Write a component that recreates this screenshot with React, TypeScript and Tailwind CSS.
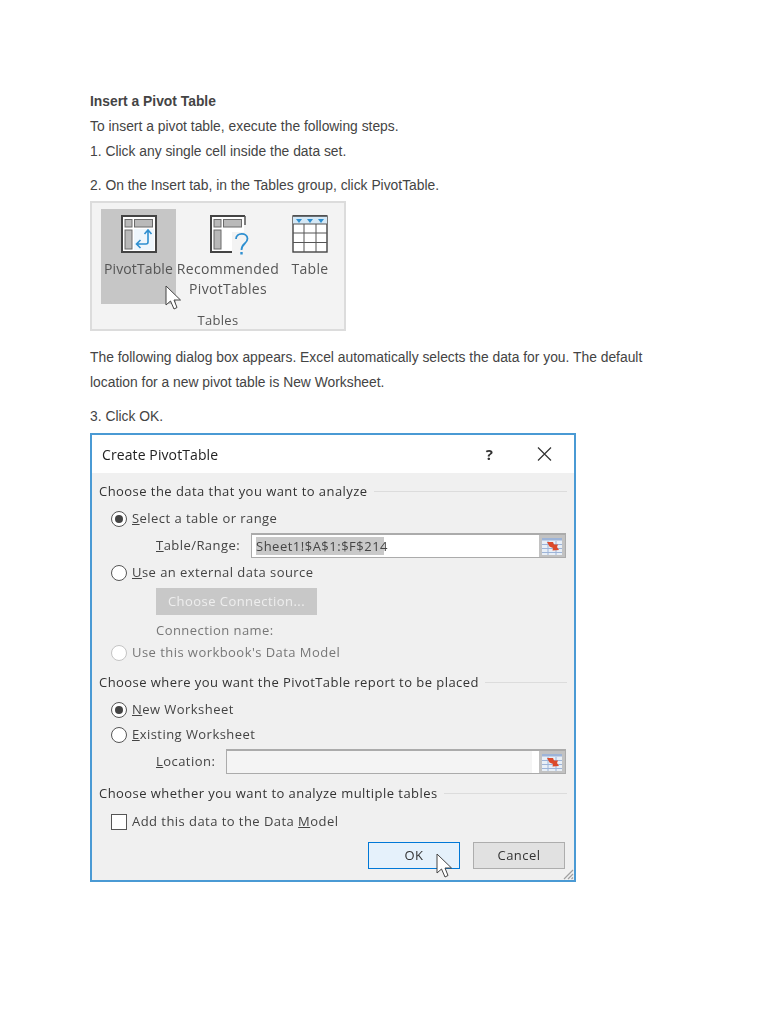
const ui = { fontFamily: '"Open Sans", "Noto Sans", sans-serif' };

function Cursor({ className }: { className: string }) {
  return (
    <svg className={className} viewBox="0 0 17 25" width="17" height="25">
      <path d="M1 1 L1 20 L5.500 16 L9 24 L12 22.500 L9 15 L15.500 15 Z" fill="#fff" stroke="#444" strokeWidth="1" strokeLinejoin="round" />
    </svg>
  );
}

function PivotIcon() {
  return (
    <svg width="36" height="38" viewBox="0 0 36 38">
      <rect x="1" y="1" width="34" height="36" fill="#fff" stroke="#444" strokeWidth="2" />
      <rect x="4" y="4.500" width="7" height="7.500" fill="#b9b9b9" stroke="#6a6a6a" />
      <rect x="13.500" y="4.500" width="18" height="7.500" fill="#b9b9b9" stroke="#6a6a6a" />
      <rect x="4" y="15" width="7" height="19" fill="#b9b9b9" stroke="#6a6a6a" />
      <rect x="13" y="14" width="20" height="21" fill="#eef6fc" />
      <path d="M27 15.500 V27 Q27 29 25 29 H16 M23.500 19 L27 15 L30.500 19 M19.500 25 L15.500 29 L19.500 33" fill="none" stroke="#2e8fd0" strokeWidth="1.600" />
    </svg>
  );
}

function RecommendedIcon() {
  return (
    <svg width="36" height="38" viewBox="0 0 36 38" className="overflow-visible">
      <path d="M35 1 H1 V37 H30" fill="#fff" stroke="#444" strokeWidth="2" />
      <path d="M2 2 H34 V36 H2 Z" fill="#fff" />
      <path d="M35 1 V10" stroke="#555" strokeWidth="1.500" />
      <rect x="4" y="4.500" width="7" height="7.500" fill="#b9b9b9" stroke="#6a6a6a" />
      <rect x="13.500" y="4.500" width="18" height="7.500" fill="#b9b9b9" stroke="#6a6a6a" />
      <rect x="4" y="15" width="7" height="19" fill="#b9b9b9" stroke="#6a6a6a" />
      <path d="M22 17 H38 V40 H22 Z" fill="#f3f3f3" />
      <path d="M26 24 C26 17.500 37 17 37.500 23.500 C37.500 29 31.500 28 31.500 35" fill="none" stroke="#2e8fd0" strokeWidth="1.800" />
      <rect x="30.300" y="37" width="2.400" height="2.500" fill="#2e8fd0" />
    </svg>
  );
}

function TableIcon() {
  return (
    <svg width="36" height="38" viewBox="0 0 36 38">
      <rect x="1" y="1" width="34" height="36" fill="#fff" stroke="#444" strokeWidth="1.400" />
      <rect x="1" y="1" width="34" height="8" fill="#d4e8f6" />
      <path d="M1 1 H35" stroke="#444" strokeWidth="1.600" />
      <path d="M4 4 H10 L7 8 Z M15 4 H21 L18 8 Z M26 4 H32 L29 8 Z" fill="#2e8fd0" />
      <path d="M1 9 H35 M1 18 H35 M1 27.500 H35 M12 9 V37 M24 9 V37" stroke="#555" strokeWidth="1" fill="none" />
    </svg>
  );
}

function RefIcon() {
  return (
    <svg width="20" height="17" viewBox="0 0 20 17">
      <rect x="0" y="0" width="20" height="17" fill="#e8eff7" />
      <rect x="0" y="0" width="20" height="2.500" fill="#9db4d8" />
      <path d="M0 6.500 H20 M0 10.500 H20 M0 14.500 H20 M6 3 V17 M14 3 V17" stroke="#9db4d8" strokeWidth="1" fill="none" />
      <path d="M5 4 H11 L12 6.500 L16 6.500 L15 9 L17 12 L10.500 12.500 L11 10 L7.500 8.500 Z" fill="#dc4a2b" />
    </svg>
  );
}

function Radio({ on, dim }: { on?: boolean; dim?: boolean }) {
  return (
    <span className={`flex h-4 w-4 shrink-0 items-center justify-center rounded-full border-[1.5px] bg-white ${dim ? "border-[#c4c4c4]" : "border-[#555]"}`}>
      {on && <span className="h-2 w-2 rounded-full bg-[#444]" />}
    </span>
  );
}

function Heading({ children }: { children: string }) {
  return (
    <div className="flex items-center gap-[6px] pl-[7px] pr-[7px]">
      <span className="whitespace-nowrap text-[13px] tracking-[0.45px] text-[#333]">{children}</span>
      <span className="h-px flex-1 bg-[#dcdcdc]" />
    </div>
  );
}

function Ribbon() {
  return (
    <div className="relative flex h-[130px] w-[256px] flex-col border-2 border-[#dcdcdc] bg-[#f3f3f3] blur-[0.35px]" style={ui}>
      <div className="flex h-[101px] items-stretch pl-[9px] pt-[5px] text-[14px] leading-[20px] text-[#555]">
        <div className="mt-[1px] flex w-[75px] shrink-0 flex-col items-center bg-[#c6c6c6] pt-[6px] tracking-[0.1px]">
          <PivotIcon />
          <span className="mt-[6px] whitespace-nowrap">PivotTable</span>
        </div>
        <div className="mt-[1px] flex w-[104px] shrink-0 flex-col items-center pt-[6px] tracking-[0.3px]">
          <RecommendedIcon />
          <span className="mt-[6px] whitespace-nowrap">Recommended</span>
          <span className="whitespace-nowrap">PivotTables</span>
        </div>
        <div className="ml-[12px] mt-[1px] flex w-[36px] shrink-0 flex-col items-center pt-[6px] tracking-[0.3px]">
          <TableIcon />
          <span className="mt-[6px] whitespace-nowrap">Table</span>
        </div>
      </div>
      <div className="mt-[7px] text-center text-[13px] leading-[18px] tracking-[0.3px] text-[#555]">Tables</div>
      <Cursor className="absolute left-[73px] top-[82px]" />
    </div>
  );
}

function Dialog() {
  return (
    <div className="relative flex h-[449px] w-[486px] flex-col border-2 border-[#4a9ad4] bg-[#f0f0f0] text-[13px] text-[#444] blur-[0.35px]" style={ui}>
      <div className="flex h-[38px] shrink-0 items-center bg-white pl-[10px]">
        <span className="flex-1 text-[14px] tracking-[0.1px] text-[#222]">Create PivotTable</span>
        <span className="mr-[44px] text-[15px] font-bold text-[#333]">?</span>
        <svg className="mr-[22px]" width="15" height="14" viewBox="0 0 15 14">
          <path d="M1 0.500 L14 13.500 M14 0.500 L1 13.500" stroke="#333" strokeWidth="1.200" />
        </svg>
      </div>

      <div className="mt-[9px] h-[18px] leading-[18px]"><Heading>Choose the data that you want to analyze</Heading></div>

      <div className="ml-[19px] mt-[10px] flex h-[18px] items-center gap-[5px] tracking-[0.45px]">
        <Radio on /><span><u>S</u>elect a table or range</span>
      </div>

      <div className="ml-[64px] mt-[5px] flex h-[25px] items-center tracking-[0.45px]">
        <span className="w-[95px]"><u>T</u>able/Range:</span>
        <div className="flex h-[25px] w-[315px] items-stretch border border-t-2 border-[#ababab] bg-white">
          <span className="my-auto ml-[4px] h-[18px] w-[128px] bg-[#c9c9c9] text-center leading-[18px] tracking-[0.5px]">Sheet1!$A$1:$F$214</span>
          <span className="ml-auto flex w-[26px] items-center justify-center bg-[#c2c2c2]"><RefIcon /></span>
        </div>
      </div>

      <div className="ml-[19px] mt-[3px] flex h-[24px] items-center gap-[5px] tracking-[0.45px]">
        <Radio /><span><u>U</u>se an external data source</span>
      </div>

      <div className="ml-[64px] mt-[3px] flex h-[27px] w-[161px] items-center justify-center bg-[#c8c8c8] tracking-[0.45px] text-[#eeeeee]">Choose Connection...</div>

      <div className="ml-[64px] mt-[6px] h-[18px] leading-[18px] tracking-[0.45px] text-[#777]">Connection name:</div>

      <div className="ml-[19px] mt-[5px] flex h-[18px] items-center gap-[5px] tracking-[0.45px] text-[#777]">
        <Radio dim /><span>Use this workbook's Data Model</span>
      </div>

      <div className="mt-[11px] h-[18px] leading-[18px]"><Heading>Choose where you want the PivotTable report to be placed</Heading></div>

      <div className="ml-[19px] mt-[10px] flex h-[18px] items-center gap-[5px] tracking-[0.45px]">
        <Radio on /><span><u>N</u>ew Worksheet</span>
      </div>

      <div className="ml-[19px] mt-[7px] flex h-[18px] items-center gap-[5px] tracking-[0.45px]">
        <Radio /><span><u>E</u>xisting Worksheet</span>
      </div>

      <div className="ml-[64px] mt-[5px] flex h-[25px] items-center tracking-[0.45px]">
        <span className="w-[70px]"><u>L</u>ocation:</span>
        <div className="flex h-[25px] w-[340px] items-stretch border border-t-2 border-[#ababab] bg-white">
          <span className="flex-1 bg-[#f4f4f4]" />
          <span className="w-[7px] bg-white" />
          <span className="flex w-[26px] items-center justify-center bg-[#c2c2c2]"><RefIcon /></span>
        </div>
      </div>

      <div className="mt-[10px] h-[18px] leading-[18px]"><Heading>Choose whether you want to analyze multiple tables</Heading></div>

      <div className="ml-[19px] mt-[11px] flex h-[18px] items-center gap-[5px] tracking-[0.45px]">
        <span className="h-4 w-4 shrink-0 border-[1.5px] border-[#555] bg-white" />
        <span>Add this data to the Data <u>M</u>odel</span>
      </div>

      <div className="mt-[11px] flex justify-end gap-[13px] pr-[9px] tracking-[0.45px]">
        <div className="flex h-[27px] w-[92px] items-center justify-center border border-[#0078d7] bg-[#e5f1fb] text-[#333]">OK</div>
        <div className="flex h-[27px] w-[92px] items-center justify-center border border-[#adadad] bg-[#e1e1e1] text-[#333]">Cancel</div>
      </div>

      <Cursor className="absolute left-[344px] top-[418px]" />
      <svg className="absolute bottom-0 right-0" width="12" height="12" viewBox="0 0 12 12">
        <path d="M11 2 L2 11 M11 6 L6 11 M11 9.500 L9.500 11" stroke="#a0a0a0" strokeWidth="1.200" />
      </svg>
    </div>
  );
}

export default function App() {
  return (
    <div className="h-[1024px] w-[768px] overflow-hidden bg-white pl-[90px] pt-[89px]">
      <div className="text-[13.85px] leading-[25px] text-[#444]" style={{ fontFamily: '"Liberation Sans", Arial, sans-serif' }}>
        <p className="font-bold">Insert a Pivot Table</p>
        <p>To insert a pivot table, execute the following steps.</p>
        <p>1. Click any single cell inside the data set.</p>
        <p className="mt-[9px]">2. On the Insert tab, in the Tables group, click PivotTable.</p>
        <div className="mb-[14px] mt-[3px]"><Ribbon /></div>
        <p className="w-[570px]">The following dialog box appears. Excel automatically selects the data for you. The default location for a new pivot table is New Worksheet.</p>
        <p className="mb-[4px] mt-[9px]">3. Click OK.</p>
      </div>
      <Dialog />
    </div>
  );
}
